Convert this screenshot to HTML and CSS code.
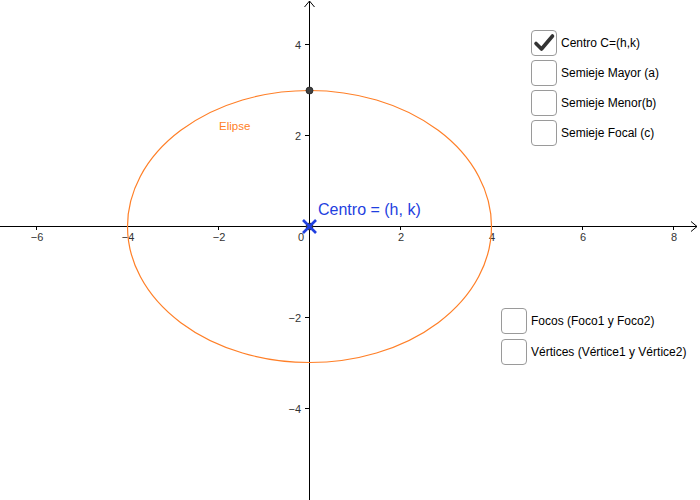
FILE: index.html
```html
<!DOCTYPE html>
<html>
<head>
<meta charset="utf-8">
<link rel="stylesheet" href="styles.css">
</head>
<body>
<div class="canvas">
  <svg class="graph" width="700" height="500" viewBox="0 0 700 500">
    <!-- axes -->
    <line x1="0" y1="226.5" x2="697" y2="226.5" class="axis"/>
    <polyline points="691,221.5 697,226.5 691,231.5" class="arrow"/>
    <line x1="309.5" y1="1" x2="309.5" y2="500" class="axis"/>
    <polyline points="304.5,7 309.5,1 314.5,7" class="arrow"/>
    <!-- ticks -->
    <g class="tick">
      <line x1="36.5" y1="226" x2="36.5" y2="230"/>
      <line x1="127.5" y1="226" x2="127.5" y2="230"/>
      <line x1="218.5" y1="226" x2="218.5" y2="230"/>
      <line x1="400.5" y1="226" x2="400.5" y2="230"/>
      <line x1="491.5" y1="226" x2="491.5" y2="230"/>
      <line x1="582.5" y1="226" x2="582.5" y2="230"/>
      <line x1="673.5" y1="226" x2="673.5" y2="230"/>
      <line x1="305" y1="44.5" x2="309" y2="44.5"/>
      <line x1="305" y1="135.5" x2="309" y2="135.5"/>
      <line x1="305" y1="317.5" x2="309" y2="317.5"/>
      <line x1="305" y1="408.5" x2="309" y2="408.5"/>
    </g>
    <g class="lbl">
      <text x="37" y="241" text-anchor="middle">−6</text>
      <text x="128" y="241" text-anchor="middle">−4</text>
      <text x="219" y="241" text-anchor="middle">−2</text>
      <text x="301" y="241" text-anchor="middle">0</text>
      <text x="401" y="241" text-anchor="middle">2</text>
      <text x="492" y="241" text-anchor="middle">4</text>
      <text x="583" y="241" text-anchor="middle">6</text>
      <text x="674" y="241" text-anchor="middle">8</text>
      <text x="301" y="48.5" text-anchor="end">4</text>
      <text x="301" y="139.5" text-anchor="end">2</text>
      <text x="301" y="321.5" text-anchor="end">−2</text>
      <text x="301" y="412.5" text-anchor="end">−4</text>
    </g>
    <!-- ellipse -->
    <ellipse cx="309.5" cy="226.5" rx="182" ry="136" class="ell"/>
    <text x="219" y="130" class="ell-lbl">Elipse</text>
    <!-- points -->
    <circle cx="309.5" cy="90.5" r="3.5" class="pt"/>
    <circle cx="309.5" cy="226.5" r="3.5" class="pt"/>
    <g class="cross">
      <line x1="303" y1="220" x2="316" y2="233"/>
      <line x1="316" y1="220" x2="303" y2="233"/>
    </g>
    <text x="318" y="215" class="centro">Centro = (h, k)</text>
  </svg>

  <div class="checks top">
    <label class="chk"><span class="box"><svg width="24" height="24" viewBox="0 0 24 24"><path d="M4 12.5 L9.5 18 L20.5 5" class="tickmark"/></svg></span><span>Centro C=(h,k)</span></label>
    <label class="chk"><span class="box"></span><span>Semieje Mayor (a)</span></label>
    <label class="chk"><span class="box"></span><span>Semieje Menor(b)</span></label>
    <label class="chk"><span class="box"></span><span>Semieje Focal (c)</span></label>
  </div>

  <div class="checks bottom">
    <label class="chk"><span class="box"></span><span>Focos (Foco1 y Foco2)</span></label>
    <label class="chk"><span class="box"></span><span>Vértices (Vértice1 y Vértice2)</span></label>
  </div>
</div>
</body>
</html>
```

FILE: styles.css
```css
html, body {
  margin: 0;
  padding: 0;
  background: #ffffff;
}
.canvas {
  position: relative;
  width: 700px;
  height: 500px;
  overflow: hidden;
  font-family: "Liberation Sans", Arial, sans-serif;
}
.graph {
  display: block;
}
.axis {
  stroke: #000;
  stroke-width: 1;
}
.arrow {
  fill: none;
  stroke: #000;
  stroke-width: 1;
}
.tick line {
  stroke: #000;
  stroke-width: 1;
}
.lbl text {
  font-family: "Liberation Sans", Arial, sans-serif;
  font-size: 11px;
  fill: #333;
}
.ell {
  fill: none;
  stroke: #ff7f27;
  stroke-width: 1.2;
}
.ell-lbl {
  font-family: "Liberation Sans", Arial, sans-serif;
  font-size: 11.5px;
  fill: #ff7f27;
}
.pt {
  fill: #404040;
  stroke: #222;
  stroke-width: 0.8;
}
.cross line {
  stroke: #1f3fe0;
  stroke-width: 2.6;
}
.centro {
  font-family: "Liberation Sans", Arial, sans-serif;
  font-size: 16px;
  fill: #1f3fe0;
}
.checks {
  position: absolute;
  display: flex;
  flex-direction: column;
  gap: 4px;
}
.checks.top {
  left: 531px;
  top: 30px;
}
.checks.bottom {
  left: 501px;
  top: 308px;
  gap: 5px;
}
.chk {
  display: flex;
  align-items: center;
  gap: 4px;
  font-size: 12px;
  color: #000;
  height: 26px;
}
.box {
  box-sizing: border-box;
  width: 26px;
  height: 26px;
  border: 1.5px solid #9a9a9a;
  border-radius: 4px;
  background: #fff;
  display: flex;
  align-items: center;
  justify-content: center;
}
.tickmark {
  fill: none;
  stroke: #333;
  stroke-width: 3.6;
  stroke-linecap: round;
  stroke-linejoin: round;
}
```
